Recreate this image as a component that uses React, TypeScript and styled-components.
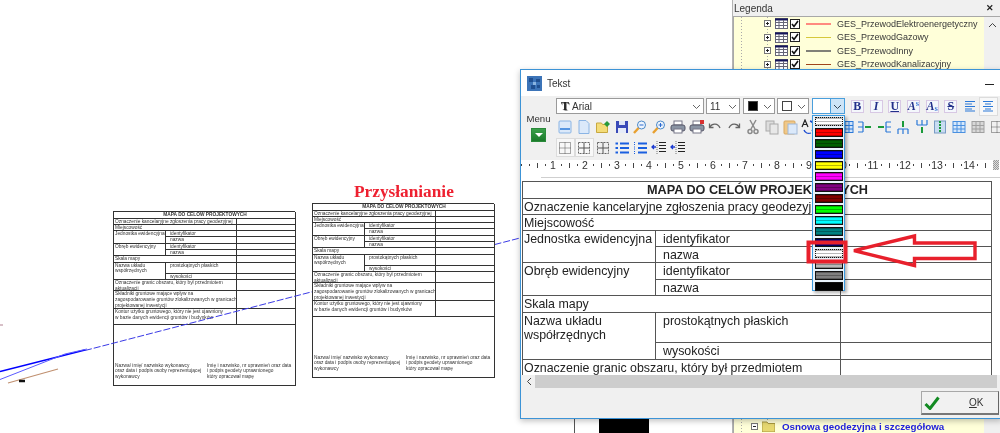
import React from "react";
import styled, { createGlobalStyle } from "styled-components";

const Global = createGlobalStyle`
  html, body { margin: 0; padding: 0; background: #fff; }
  body { font-family: "Liberation Sans", Arial, sans-serif; }
`;

const Desktop = styled.div`
  position: relative;
  width: 1000px;
  height: 433px;
  overflow: hidden;
  background: #fff;
  filter: blur(0.45px);
`;

/* ---------- printed form (map sheets and editor) ---------- */
const FormGrid = styled.div<{ $cols: string; $rows: string; $line: string }>`
  display: grid;
  grid-template-columns: ${(p) => p.$cols};
  grid-template-rows: ${(p) => p.$rows};
  border-top: 1px solid ${(p) => p.$line};
  border-left: 1px solid ${(p) => p.$line};
  --line: ${(p) => p.$line};
  background: #fff;
`;

const Cell = styled.div<{ $c?: number; $r?: number; $title?: boolean; $indent?: boolean }>`
  grid-column: span ${(p) => p.$c ?? 1};
  grid-row: span ${(p) => p.$r ?? 1};
  border-right: 1px solid var(--line);
  border-bottom: 1px solid var(--line);
  overflow: hidden;
  white-space: pre;
  font-weight: ${(p) => (p.$title ? 700 : 400)};
  text-align: ${(p) => (p.$title ? "center" : "left")};
`;

const EditorCell = styled(Cell)`
  font-size: ${(p) => (p.$title ? 12.7 : 12.4)}px;
  line-height: 14.3px;
  color: #222;
  padding: 1px 0 0 ${(p) => (p.$indent ? 7 : 1)}px;
`;

const SheetCell = styled(Cell)`
  font-size: 4.8px;
  line-height: 5.6px;
  color: #333;
  padding: 0 0 0 ${(p) => (p.$indent ? 4 : 1)}px;
`;

const formCells = [
  { t: "MAPA DO CELÓW PROJEKTOWYCH", c: 3, title: true },
  { t: "Oznaczenie kancelaryjne zgłoszenia pracy geodezyjnej", c: 2 },
  {},
  { t: "Miejscowość", c: 2 },
  {},
  { t: "Jednostka ewidencyjna", r: 2 },
  { t: "identyfikator", indent: true },
  {},
  { t: "nazwa", indent: true },
  {},
  { t: "Obręb ewidencyjny", r: 2 },
  { t: "identyfikator", indent: true },
  {},
  { t: "nazwa", indent: true },
  {},
  { t: "Skala mapy", c: 2 },
  {},
  { t: "Nazwa układu\nwspółrzędnych", r: 2 },
  { t: "prostokątnych płaskich", indent: true },
  {},
  { t: "wysokości", indent: true },
  {},
  { t: "Oznaczenie granic obszaru, który był przedmiotem\naktualizacji", c: 2 },
  {},
  { t: "Składniki gruntowe mające wpływ na\nzagospodarowanie gruntów zlokalizowanych w granicach\nprojektowanej inwestycji", c: 2 },
  {},
  { t: "Kontur użytku gruntowego, który nie jest ujawniony\nw bazie danych ewidencji gruntów i budynków", c: 2 },
  {},
];

const renderCells = (C: typeof EditorCell) =>
  formCells.map((x: any, i) => (
    <C key={i} $c={x.c} $r={x.r} $title={x.title} $indent={x.indent}>
      {x.t}
    </C>
  ));

/* ---------- map sheets on the canvas ---------- */
const Sheet = styled.div<{ $x: number; $y: number }>`
  position: absolute;
  left: ${(p) => p.$x}px;
  top: ${(p) => p.$y}px;
  width: 182px;
`;

const SheetFooter = styled.div`
  grid-column: span 3;
  border-right: 1px solid var(--line);
  border-bottom: 1px solid var(--line);
  display: grid;
  grid-template-columns: 92px 88px;
  align-items: end;
  padding: 0 0 5px 1px;
  font-size: 4.8px;
  line-height: 5.7px;
  color: #333;
  white-space: pre;
  overflow: hidden;
`;

const MapSheet = ({ x, y }: { x: number; y: number }) => (
  <Sheet $x={x} $y={y}>
    <FormGrid
      $line="#333"
      $cols="52px 71px 59px"
      $rows="6.7px 6px 6.3px 6.3px 6.3px 6px 6.3px 6.7px 11.3px 6.3px 11.3px 18px 16px 60.3px"
    >
      {renderCells(SheetCell as any)}
      <SheetFooter>
        <span>{"Nazwa/ imię/ nazwisko wykonawcy\noraz data i podpis osoby reprezentującej\nwykonawcy"}</span>
        <span>{"Imię i nazwisko, nr uprawnień oraz data\ni podpis geodety uprawnionego\nktóry opracował mapę"}</span>
      </SheetFooter>
    </FormGrid>
  </Sheet>
);

const CanvasLines = styled.svg`
  position: absolute;
  left: 0;
  top: 0;
`;

const Caption = styled.div`
  position: absolute;
  left: 354px;
  top: 181px;
  font-family: "Liberation Serif", "Times New Roman", serif;
  font-weight: 700;
  font-size: 17.3px;
  line-height: 21px;
  color: #ee2030;
`;

const BackShape = styled.div`
  position: absolute;
  left: 574px;
  top: 415px;
  width: 74px;
  height: 18px;
  border-left: 1px solid #555;
  display: flex;
  justify-content: flex-end;
`;

const BackFill = styled.div`
  width: 50px;
  background: #000;
`;

/* ---------- legend window ---------- */
const Legend = styled.div`
  position: absolute;
  left: 732px;
  top: 0;
  width: 268px;
  height: 433px;
  background: #f0f0f0;
  border-left: 1px solid #b4b4b4;
  display: flex;
  flex-direction: column;
  box-sizing: border-box;
`;

const LegendHeader = styled.div`
  height: 16px;
  flex: none;
  display: flex;
  align-items: center;
  justify-content: space-between;
  padding: 0 6px 0 1px;
  font-size: 10px;
  color: #333;
`;

const CloseMark = styled.span`
  font-size: 9px;
  font-weight: 700;
  color: #222;
`;

const LegendBody = styled.div`
  flex: 1;
  display: flex;
  border-top: 1px solid #a8a8a8;
  border-left: 1px solid #a8a8a8;
  min-height: 0;
`;

const Tree = styled.div`
  width: 250px;
  display: flex;
  flex-direction: column;
  justify-content: space-between;
  background:
    repeating-linear-gradient(to bottom, #aaa 0 1px, transparent 1px 3px) 7px 0 / 1px 100% no-repeat,
    repeating-linear-gradient(to bottom, #aaa 0 1px, transparent 1px 3px) 33px 0 / 1px 100% no-repeat,
    #ffffd9;
`;

const TreeGroup = styled.div`
  display: flex;
  flex-direction: column;
`;

const TreeRow = styled.div<{ $inset: number }>`
  height: 13.5px;
  display: flex;
  align-items: center;
  padding-left: ${(p) => p.$inset}px;
`;

const Expander = styled.span<{ $open?: boolean }>`
  width: 7px;
  height: 7px;
  border: 1px solid #777;
  box-sizing: border-box;
  margin-right: 4px;
  flex: none;
  background:
    linear-gradient(#222, #222) center / 3px 1px no-repeat,
    ${(p) => (p.$open ? "" : "linear-gradient(#222, #222) center / 1px 3px no-repeat,")}
    #fff;
`;

const CheckBox = styled.span`
  width: 10px;
  height: 10px;
  box-sizing: border-box;
  border: 1px solid #222;
  background: #fff;
  margin: 0 6px 0 2px;
  display: flex;
`;

const LayerLine = styled.span<{ $color: string; $w: number }>`
  width: 25px;
  height: ${(p) => p.$w}px;
  background: ${(p) => p.$color};
  margin-right: 6px;
  flex: none;
`;

const LayerName = styled.span`
  font-size: 9px;
  color: #383838;
  white-space: nowrap;
`;

const GroupName = styled.span`
  font-size: 9.8px;
  font-weight: 700;
  color: #2222dd;
  white-space: nowrap;
  margin-left: 7px;
`;

const LegendScroll = styled.div`
  flex: 1;
  display: flex;
  justify-content: center;
  padding-top: 4px;
  height: 12px;
`;

const layers = [
  { n: "GES_PrzewodElektroenergetyczny", c: "#ff8a80", w: 2 },
  { n: "GES_PrzewodGazowy", c: "#d6c83c", w: 1 },
  { n: "GES_PrzewodInny", c: "#808078", w: 1.5 },
  { n: "GES_PrzewodKanalizacyjny", c: "#a0441c", w: 1 },
];

/* ---------- text dialog ---------- */
const Dialog = styled.div`
  position: absolute;
  left: 520px;
  top: 69px;
  width: 482px;
  height: 350px;
  box-sizing: border-box;
  border: 1px solid #3c93d6;
  background: #f0f0f0;
  display: flex;
  flex-direction: column;
  box-shadow: 0 2px 6px rgba(0, 0, 0, 0.25);
`;

const TitleBar = styled.div`
  height: 26px;
  flex: none;
  background: #fff;
  display: flex;
  align-items: center;
  padding: 0 0 0 6px;
  font-size: 10px;
  color: #333;
  gap: 5px;
`;

const Minimize = styled.span`
  margin-left: auto;
  margin-right: 7px;
  width: 9px;
  height: 1px;
  background: #222;
  transform: translateY(1px);
`;

const Toolbar = styled.div`
  height: 64px;
  flex: none;
  display: flex;
  overflow: hidden;
`;

const MenuColumn = styled.div`
  width: 35px;
  flex: none;
  display: flex;
  flex-direction: column;
  align-items: center;
  padding-top: 16px;
  font-size: 9.6px;
  line-height: 13px;
  color: #333;
  gap: 3px;
`;

const MenuButton = styled.div`
  width: 13px;
  height: 12px;
  background: linear-gradient(#3aa04a, #1a7a2a);
  border: 1px solid #2a8a3a;
  display: flex;
  align-items: center;
  justify-content: center;
  &::after {
    content: "";
    border-left: 4px solid transparent;
    border-right: 4px solid transparent;
    border-top: 4px solid #fff;
  }
`;

const ToolColumn = styled.div`
  flex: 1;
  min-width: 0;
  padding-top: 2px;
  display: flex;
  flex-direction: column;
`;

const ComboRow = styled.div`
  height: 16px;
  display: flex;
  align-items: center;
  margin-bottom: 2px;
`;

const ToolRow = styled.div`
  height: 21px;
  display: flex;
  align-items: center;
`;

const Combo = styled.div<{ $w: number; $gap: number }>`
  width: ${(p) => p.$w}px;
  margin-right: ${(p) => p.$gap}px;
  height: 16px;
  box-sizing: border-box;
  flex: none;
  background: #fff;
  border: 1px solid #9a9a9a;
  display: flex;
  align-items: center;
  padding-left: 3px;
  font-size: 10px;
  color: #333;
  gap: 2px;
`;

const ActiveCombo = styled(Combo)`
  border-color: #4a9fdc;
  padding-left: 0;
`;

const ComboArrow = styled.span`
  margin-left: auto;
  width: 14px;
  height: 100%;
  flex: none;
  display: flex;
  align-items: center;
  justify-content: center;
`;

const ActiveArrow = styled(ComboArrow)`
  width: 13px;
  background: #cde4f7;
  border-left: 1px solid #4a9fdc;
`;

const ColorChip = styled.span<{ $fill: string }>`
  width: 10px;
  height: 10px;
  background: ${(p) => p.$fill};
  border: 1px solid #444;
  box-sizing: border-box;
  margin-left: 1px;
`;

const FontGlyph = styled.span`
  font-family: "Liberation Serif", serif;
  font-weight: 700;
  font-size: 12px;
  color: #222;
  text-shadow: 1px 1px 0 #999;
  margin: 0 1px;
`;

const FormatButton = styled.div<{ $italic?: boolean; $deco?: string }>`
  width: 18.7px;
  height: 16px;
  flex: none;
  display: flex;
  align-items: center;
  justify-content: center;
  font-family: "Liberation Serif", serif;
  font-weight: 700;
  font-size: 12px;
  color: #22308a;
  font-style: ${(p) => (p.$italic ? "italic" : "normal")};
  text-decoration: ${(p) => p.$deco ?? "none"};
`;

const FormatInner = styled.span`
  width: 13px;
  height: 13px;
  border: 1px solid #d8c8e4;
  background: #f4f7fc;
  display: flex;
  align-items: center;
  justify-content: center;
  box-sizing: border-box;
  line-height: 11px;
`;

const SuperS = styled.span`
  font-size: 6px;
  font-style: normal;
  color: #2a6ad0;
  align-self: flex-start;
  line-height: 6px;
`;

const SubS = styled(SuperS)`
  align-self: flex-end;
`;

const ToolCell = styled.div<{ $on?: boolean }>`
  width: 18.75px;
  height: 19px;
  flex: none;
  display: flex;
  align-items: center;
  justify-content: center;
  background: ${(p) => (p.$on ? "#f8f8f8" : "transparent")};
  box-sizing: border-box;
  outline: ${(p) => (p.$on ? "1px solid #dcdcdc" : "none")};
  outline-offset: -1px;
`;

const Ruler = styled.div`
  height: 10px;
  flex: none;
  background: #fff;
  display: flex;
  overflow: hidden;
  position: relative;
`;

const RulerUnit = styled.div<{ $lead?: boolean }>`
  flex: none;
  width: 32px;
  margin-left: ${(p) => (p.$lead ? -36 : 0)}px;
  display: grid;
  grid-template-columns: repeat(4, 8px);
  place-items: center;
  font-size: 10.5px;
  line-height: 10px;
  color: #333;
`;

const RulerTick = styled.span<{ $tall?: boolean }>`
  display: block;
  width: 1px;
  height: ${(p) => (p.$tall ? 5 : 2)}px;
  background: #444;
`;

const RulerEnd = styled.div`
  position: absolute;
  right: 2px;
  top: 0;
  width: 6px;
  height: 10px;
  background: repeating-conic-gradient(#999 0 25%, #ddd 0 50%) 0 0 / 2px 2px;
`;

const Editor = styled.div`
  height: 205px;
  flex: none;
  background: #fff;
  overflow: hidden;
  padding-top: 7px;
  box-sizing: border-box;
`;

const PageEdge = styled.div`
  height: 1px;
  background: #cfcfcf;
  margin: 0 0 3px 20px;
`;

const EditorPage = styled.div`
  margin-left: 1px;
  width: 470px;
`;

const HScroll = styled.div`
  height: 13px;
  flex: none;
  display: flex;
  align-items: center;
  padding-left: 4px;
`;

const HThumb = styled.div`
  margin-left: 1px;
  width: 462px;
  height: 100%;
  background: #cdcdcd;
`;

const Footer = styled.div`
  flex: 1;
  display: flex;
  justify-content: flex-end;
  align-items: center;
`;

const OkButton = styled.div`
  width: 78px;
  height: 24px;
  box-sizing: border-box;
  background: #f1f1f1;
  border: 1px solid #a8a8a8;
  border-right-color: #666;
  border-bottom: 2px solid #777;
  display: flex;
  align-items: center;
  padding-left: 2px;
  margin-right: 2px;
  font-size: 10px;
  color: #333;
`;

const OkLabel = styled.span`
  margin-left: 29px;
  &::first-letter { text-decoration: underline; }
`;

/* ---------- colour dropdown ---------- */
const Drop = styled.div`
  position: absolute;
  left: 291px;
  top: 45px;
  width: 33px;
  height: 176px;
  box-sizing: border-box;
  border: 1px solid #3c9ade;
  background: #e8f2fa;
  box-shadow: 2px 2px 3px rgba(0, 0, 0, 0.3);
  display: flex;
  flex-direction: column;
`;

const DropItem = styled.div`
  height: 11px;
  flex: none;
  display: flex;
  align-items: center;
  justify-content: center;
`;

const Swatch = styled.span<{ $c: string; $dot?: boolean }>`
  width: 28px;
  height: 9.5px;
  box-sizing: border-box;
  border: 1px ${(p) => (p.$dot ? "dotted" : "solid")} #111;
  background:
    repeating-linear-gradient(to bottom, rgba(0, 0, 0, 0.28) 0 1px, transparent 1px 3px),
    ${(p) => p.$c};
`;

const dropColors = [
  "#ffffff", "#ff0000", "#006000", "#0000ff", "#ffff00", "#ff00ff", "#800080", "#800000",
  "#00ff00", "#00ffff", "#008080", "#000080", "#ffffff", "#b8b8b8", "#808080", "#000000",
];

/* ---------- icons ---------- */
const S = ({ children }: { children?: React.ReactNode }) => (
  <svg width="16" height="16" viewBox="0 0 16 16" fill="none">{children}</svg>
);
const blue = "#2a78d8";
const paper = "#dbe9fa";

const lens = (sign: string) => (
  <S>
    <circle cx="9.5" cy="6" r="4" fill="#eef5fd" stroke="#4a88c8" />
    <path d="M6.6 9 2 14" stroke="#e8a030" strokeWidth="2.4" />
    <path d={sign} stroke="#2a6ad0" />
  </S>
);
const printer = (badge: boolean) => (
  <S>
    <rect x="4" y="2" width="8" height="4" fill="#fff" stroke="#778" />
    <rect x="1" y="6" width="14" height="6" rx="2" fill="#8a94a4" stroke="#556" />
    <rect x="4" y="10" width="8" height="4" fill="#fff" stroke="#778" />
    {badge && <path d="M11 1h4v4h-4z" fill="#d83030" />}
  </S>
);
const tableIcon = (c: string, fill: string) => (
  <S>
    <rect x="2" y="2.5" width="12" height="11" fill={fill} stroke={c} />
    <path d="M2 6.5h12M2 10h12M6 2.5v11M10 2.5v11" stroke={c} />
  </S>
);
const dashGrid = (
  <S>
    <rect x="2.5" y="2.5" width="11" height="11" stroke="#555" strokeDasharray="1 1" />
    <path d="M2.5 8h11M8 2.5v11" stroke="#555" strokeDasharray="1 1" />
  </S>
);
const lineGrid = (
  <S>
    <rect x="2.5" y="2.5" width="11" height="11" stroke="#666" strokeDasharray="2 1" />
    <path d="M2.5 8h11M8 2.5v11" stroke="#555" />
  </S>
);
const listIcon = (num: boolean) => (
  <S>
    <path d="M6 3.5h9M6 8h9M6 12.5h9" stroke="#1a5fe0" strokeWidth="2" />
    <path d={num ? "M2.5 2v3M2.5 6.5v3M2.5 11v3" : "M1.5 3.5h2.5M1.5 8h2.5M1.5 12.5h2.5"} stroke="#1a5fe0" strokeWidth={num ? 1 : 2} strokeDasharray={num ? "1 1" : undefined} />
  </S>
);
const indentIcon = (
  <S>
    <path d="M8 2.5h7M8 5.5h7M8 8.5h7M8 11.5h7" stroke="#222" />
    <path d="M6 1v14" stroke="#777" strokeDasharray="1 1" />
    <path d="M1 7h4M3 5 1 7l2 2" stroke="#1a3ad0" strokeWidth="1.3" />
  </S>
);
const splitIcon = (rotate: number, flip: boolean) => (
  <S>
    <g transform={`rotate(${rotate} 8 8)`}>
      <path d={flip ? "M10 3h5M10 8h5M10 13h5M10 3v10" : "M1 3h5M1 8h5M1 13h5M6 3v10"} stroke={blue} strokeWidth="1.2" />
      <path d={flip ? "M2 8h6" : "M8 8h6"} stroke="#1a9a3a" strokeWidth="2" />
    </g>
  </S>
);

const row2: React.ReactNode[] = [
  <S><rect x="2" y="2" width="12" height="12" rx="1" fill={paper} stroke="#8ab4e4" /><path d="M3 10h10" stroke={blue} strokeWidth="1.5" /></S>,
  <S><path d="M3 1.5h7l3 3v10H3z" fill={paper} stroke="#8ab4e4" /></S>,
  <S><path d="M1.5 4h5l1 1.5h5v8h-11z" fill="#f4dc78" stroke="#c8a840" /><path d="M9 5l3-3 3 3-3 3z" fill="#2a9a3a" /></S>,
  <S><path d="M2 2h12v12H2z" fill="#3a4ab8" /><rect x="5" y="2" width="6" height="4" fill="#dfe6f6" /><rect x="4" y="9" width="8" height="5" fill="#e6ebf8" /></S>,
  lens("M7.5 6h4"),
  lens("M7.5 6h4M9.5 4v4"),
  printer(false),
  printer(true),
  <S><path d="M3 8c2-4 8-4 10 1" stroke="#666" strokeWidth="1.3" /><path d="M2.5 4.5v4h4" stroke="#666" strokeWidth="1.3" /></S>,
  <S><path d="M13 8C11 4 5 4 3 9" stroke="#666" strokeWidth="1.3" /><path d="M13.5 4.5v4h-4" stroke="#666" strokeWidth="1.3" /></S>,
  <S><path d="M5 1l5 9M11 1 6 10" stroke="#8a8a8a" strokeWidth="1.5" /><circle cx="5" cy="12.5" r="2" stroke="#8a8a8a" strokeWidth="1.5" /><circle cx="11" cy="12.5" r="2" stroke="#8a8a8a" strokeWidth="1.5" /></S>,
  <S><rect x="2" y="2" width="8" height="10" fill="#ddd" stroke="#aaa" /><rect x="6" y="5" width="8" height="10" fill="#e8e8e8" stroke="#aaa" /></S>,
  <S><rect x="2" y="2" width="11" height="13" rx="1" fill="#f0c888" stroke="#d8a860" /><rect x="6" y="5" width="9" height="10" fill={paper} stroke="#a0b8d8" /></S>,
  <S><path d="M1 8 4 1l3 7M2.2 5.5h3.6" stroke="#222" strokeWidth="1.2" /><path d="M9 2c4 1 5 6 2 10M3 11c1 3 4 4 7 3" stroke="#1a4ad0" strokeWidth="1.3" /></S>,
  <S />,
  tableIcon(blue, "#cfe3fa"),
  splitIcon(0, false),
  splitIcon(0, true),
  splitIcon(90, true),
  splitIcon(90, false),
  <S><rect x="2.5" y="2" width="11" height="12" fill="#c8dcf2" stroke="#7a9cc4" /><path d="M8 2v12" stroke="#1a9a3a" strokeWidth="2" strokeDasharray="2 1" /></S>,
  tableIcon("#4a90e0", "#d6e8fb"),
  tableIcon("#a0a0a0", "#d8d8d8"),
  dashGrid,
];

const row3: { i: React.ReactNode; on?: boolean }[] = [
  { i: dashGrid, on: true },
  { i: lineGrid, on: true },
  { i: lineGrid },
  { i: listIcon(false) },
  { i: listIcon(true) },
  { i: indentIcon },
  { i: indentIcon },
];

const Chevron = ({ c = "#666", rot = 0 }: { c?: string; rot?: number }) => (
  <svg width="9" height="9" viewBox="0 0 9 9" fill="none">
    <path d="M1 3l3.5 3.5L8 3" stroke={c} transform={`rotate(${rot} 4.5 4.5)`} />
  </svg>
);

const TableGlyph = () => (
  <svg width="13" height="11" viewBox="0 0 13 11" fill="none" style={{ flex: "none" }}>
    <rect x="0.5" y="0.5" width="12" height="10" fill="#fff" stroke="#667" />
    <path d="M0 1.5h13" stroke="#14145a" strokeWidth="2" />
    <path d="M0.5 4.5h12M0.5 7.5h12M4 2v9M8.5 2v9" stroke="#667" />
  </svg>
);

const TickGlyph = () => (
  <svg width="8" height="8" viewBox="0 0 8 8" fill="none"><path d="M1 4l2 2.5L7 1" stroke="#111" strokeWidth="1.6" /></svg>
);

const AppIcon = () => (
  <svg width="15" height="15" viewBox="0 0 15 15">
    <rect width="15" height="15" fill="#3c74b8" />
    <path d="M2 2h4v4H2zM9 3h4v3H9zM4 9h4v4H4zM10 9h3v3h-3z" fill="#1f4f90" />
    <path d="M6 6h3v3H6z" fill="#8ab4e0" />
  </svg>
);

export default function App() {
  return (
    <Desktop>
      <Global />
      <MapSheet x={113} y={211} />
      <CanvasLines width="1000" height="433" viewBox="0 0 1000 433" fill="none">
        <path d="M85 350.5 520 238" stroke="#3a3ae6" strokeDasharray="7 2" />
        <path d="M0 371.5 85 350" stroke="#0000ff" strokeWidth="1.6" />
        <path d="M0 379.5 65 354l22-5" stroke="#5a5aff" />
        <path d="M8 383l50-14" stroke="#c09070" strokeWidth="1.2" />
        <path d="M19 381h6" stroke="#111" strokeWidth="2.5" />
        <path d="M0 325h3" stroke="#b08090" />
      </CanvasLines>
      <MapSheet x={312} y={203} />
      <Caption>Przysłanianie</Caption>
      <BackShape><BackFill /></BackShape>

      <Legend>
        <LegendHeader>
          <span>Legenda</span>
          <CloseMark>✕</CloseMark>
        </LegendHeader>
        <LegendBody>
          <Tree>
            <TreeGroup>
              {layers.map((l) => (
                <TreeRow key={l.n} $inset={30}>
                  <Expander />
                  <TableGlyph />
                  <CheckBox><TickGlyph /></CheckBox>
                  <LayerLine $color={l.c} $w={l.w} />
                  <LayerName>{l.n}</LayerName>
                </TreeRow>
              ))}
            </TreeGroup>
            <TreeGroup>
              <TreeRow $inset={17}>
                <Expander $open />
                <svg width="13" height="11" viewBox="0 0 13 11"><path d="M0 1h5l1 1.5h7V11H0z" fill="#e6d870" stroke="#a89840" /></svg>
                <GroupName>Osnowa geodezyjna i szczegółowa</GroupName>
              </TreeRow>
            </TreeGroup>
          </Tree>
          <LegendScroll>
            <Chevron c="#444" rot={180} />
          </LegendScroll>
        </LegendBody>
      </Legend>

      <Dialog>
        <TitleBar>
          <AppIcon />
          <span>Tekst</span>
          <Minimize />
        </TitleBar>
        <Toolbar>
          <MenuColumn>
            <span>Menu</span>
            <MenuButton />
          </MenuColumn>
          <ToolColumn>
            <ComboRow>
              <Combo $w={148} $gap={2}>
                <FontGlyph>T</FontGlyph>
                <span>Arial</span>
                <ComboArrow><Chevron /></ComboArrow>
              </Combo>
              <Combo $w={34} $gap={3}>
                <span>11</span>
                <ComboArrow><Chevron /></ComboArrow>
              </Combo>
              <Combo $w={32} $gap={2}>
                <ColorChip $fill="#000" />
                <ComboArrow><Chevron /></ComboArrow>
              </Combo>
              <Combo $w={32} $gap={3}>
                <ColorChip $fill="#fff" />
                <ComboArrow><Chevron /></ComboArrow>
              </Combo>
              <ActiveCombo $w={33} $gap={3}>
                <ActiveArrow><Chevron c="#345" /></ActiveArrow>
              </ActiveCombo>
              <FormatButton><FormatInner>B</FormatInner></FormatButton>
              <FormatButton $italic><FormatInner>I</FormatInner></FormatButton>
              <FormatButton $deco="underline"><FormatInner>U</FormatInner></FormatButton>
              <FormatButton $italic><FormatInner>A<SuperS>S</SuperS></FormatInner></FormatButton>
              <FormatButton $italic><FormatInner>A<SubS>S</SubS></FormatInner></FormatButton>
              <FormatButton $deco="line-through"><FormatInner>S</FormatInner></FormatButton>
              <ToolCell><S><path d="M3 3.5h10M3 6h7M3 8.5h10M3 11h7M3 13h10" stroke={blue} /></S></ToolCell>
              <ToolCell $on><S><path d="M3 3.5h10M5 6h6M3 8.5h10M5 11h6M3 13h10" stroke={blue} /></S></ToolCell>
            </ComboRow>
            <ToolRow>
              {row2.map((icon, i) => (
                <ToolCell key={i}>{icon}</ToolCell>
              ))}
            </ToolRow>
            <ToolRow>
              {row3.map((b, i) => (
                <ToolCell key={i} $on={b.on}>{b.i}</ToolCell>
              ))}
            </ToolRow>
          </ToolColumn>
        </Toolbar>
        <Ruler>
          {["", "", 1, 2, 3, 4, 5, 6, 7, 8, 9, 10, 11, 12, 13, 14].map((n, i) => (
            <RulerUnit key={i} $lead={i === 0}>
              {n === "" ? <RulerTick /> : <span>{n}</span>}
              <RulerTick />
              <RulerTick $tall />
              <RulerTick />
            </RulerUnit>
          ))}
          <RulerEnd />
        </Ruler>
        <Editor>
          <PageEdge />
          <EditorPage>
            <FormGrid
              $line="#555"
              $cols="133px 185px 151px"
              $rows="17px 16px 16px 16px 16px 17px 16px 17px 30px 17px 40px 40px 40px"
            >
              {renderCells(EditorCell)}
            </FormGrid>
          </EditorPage>
        </Editor>
        <HScroll>
          <Chevron c="#444" rot={90} />
          <HThumb />
        </HScroll>
        <Footer>
          <OkButton>
            <svg width="16" height="14" viewBox="0 0 16 14" fill="none"><path d="M1.5 8 6 12.5 14.5 1.5" stroke="#128a22" strokeWidth="3" /></svg>
            <OkLabel>OK</OkLabel>
          </OkButton>
        </Footer>
        <Drop>
          {dropColors.map((c, i) => (
            <DropItem key={i}>
              <Swatch $c={c} $dot={c === "#ffffff"} />
            </DropItem>
          ))}
        </Drop>
      </Dialog>

      <CanvasLines width="1000" height="433" viewBox="0 0 1000 433" fill="none">
        <rect x="808.5" y="242.5" width="37" height="19" stroke="#e8202c" strokeWidth="4" />
        <path d="M854 250.7 914.5 236v7h60.5v15.5h-60.5v7z" stroke="#e8202c" strokeWidth="3.4" />
      </CanvasLines>
    </Desktop>
  );
}
